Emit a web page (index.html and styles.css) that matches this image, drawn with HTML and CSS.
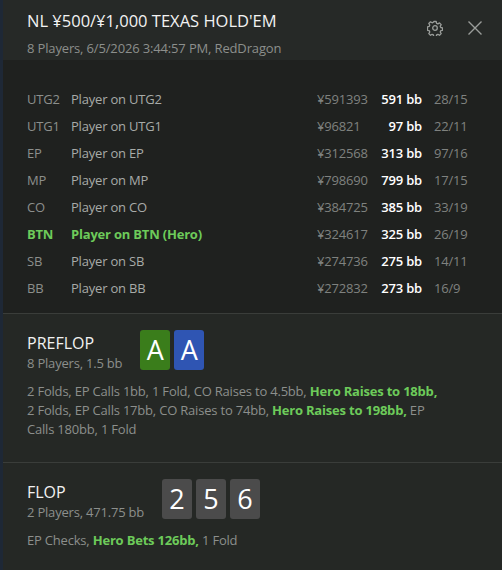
FILE: index.html
```html
<!DOCTYPE html>
<html lang="en">
<head>
    <meta charset="UTF-8">
    <title>Hand Details</title>
    <link rel="stylesheet" href="styles.css">
</head>
<body>
    <div class="panel">
        <div class="header">
            <div class="title-block">
                <div class="title">NL ¥500/¥1,000 TEXAS HOLD'EM</div>
                <div class="subtitle">8 Players, 6/5/2026 3:44:57 PM, RedDragon</div>
            </div>
            <div class="header-icons">
                <svg class="icon gear" width="16" height="16" viewBox="0 0 16 16">
                    <path d="M6.8 1.5h2.4l.4 1.8 1.3.6 1.6-1 1.7 1.7-1 1.6.6 1.3 1.7.4v2.4l-1.7.4-.6 1.3 1 1.6-1.7 1.7-1.6-1-1.3.6-.4 1.7H6.8l-.4-1.7-1.3-.6-1.6 1-1.7-1.7 1-1.6-.6-1.3-1.7-.4V6.8l1.7-.4.6-1.3-1-1.6 1.7-1.7 1.6 1 1.3-.6z" fill="none" stroke="#9a9d9a" stroke-width="1.3" stroke-linejoin="round"/>
                    <circle cx="8" cy="8" r="2.3" fill="none" stroke="#9a9d9a" stroke-width="1.3"/>
                </svg>
                <svg class="icon close" width="16" height="16" viewBox="0 0 16 16">
                    <path d="M1.5 1.5l13 13M14.5 1.5l-13 13" stroke="#9a9d9a" stroke-width="1.4"/>
                </svg>
            </div>
        </div>

        <div class="players">
            <div class="row"><span class="pos">UTG2</span><span class="name">Player on UTG2</span><span class="stack">¥591393</span><span class="bb">591 bb</span><span class="ratio">28/15</span></div>
            <div class="row"><span class="pos">UTG1</span><span class="name">Player on UTG1</span><span class="stack">¥96821</span><span class="bb">97 bb</span><span class="ratio">22/11</span></div>
            <div class="row"><span class="pos">EP</span><span class="name">Player on EP</span><span class="stack">¥312568</span><span class="bb">313 bb</span><span class="ratio">97/16</span></div>
            <div class="row"><span class="pos">MP</span><span class="name">Player on MP</span><span class="stack">¥798690</span><span class="bb">799 bb</span><span class="ratio">17/15</span></div>
            <div class="row"><span class="pos">CO</span><span class="name">Player on CO</span><span class="stack">¥384725</span><span class="bb">385 bb</span><span class="ratio">33/19</span></div>
            <div class="row hero"><span class="pos">BTN</span><span class="name">Player on BTN (Hero)</span><span class="stack">¥324617</span><span class="bb">325 bb</span><span class="ratio">26/19</span></div>
            <div class="row"><span class="pos">SB</span><span class="name">Player on SB</span><span class="stack">¥274736</span><span class="bb">275 bb</span><span class="ratio">14/11</span></div>
            <div class="row"><span class="pos">BB</span><span class="name">Player on BB</span><span class="stack">¥272832</span><span class="bb">273 bb</span><span class="ratio">16/9</span></div>
        </div>

        <div class="street">
            <div class="street-head">
                <div class="street-info">
                    <div class="street-name">PREFLOP</div>
                    <div class="street-meta">8 Players, 1.5 bb</div>
                </div>
                <div class="cards">
                    <div class="card green">A</div>
                    <div class="card blue">A</div>
                </div>
            </div>
            <p class="actions">2 Folds, EP Calls 1bb, 1 Fold, CO Raises to 4.5bb, <b>Hero Raises to 18bb,</b><br>2 Folds, EP Calls 17bb, CO Raises to 74bb, <b>Hero Raises to 198bb,</b> EP Calls 180bb, 1 Fold</p>
        </div>

        <div class="street">
            <div class="street-head">
                <div class="street-info">
                    <div class="street-name">FLOP</div>
                    <div class="street-meta">2 Players, 471.75 bb</div>
                </div>
                <div class="cards">
                    <div class="card grey">2</div>
                    <div class="card grey">5</div>
                    <div class="card grey">6</div>
                </div>
            </div>
            <p class="actions">EP Checks, <b>Hero Bets 126bb,</b> 1 Fold</p>
        </div>
    </div>
</body>
</html>
```

FILE: styles.css
```css
body {
    margin: 0;
    background-color: #1e2836;
    font-family: "Open Sans", "Noto Sans", sans-serif;
}
.panel {
    margin-left: 3px;
    height: 570px;
    background-color: #252825;
    color: #8c8f8c;
    overflow: hidden;
}
.header {
    display: flex;
    justify-content: space-between;
    align-items: flex-start;
    height: 60px;
    padding: 10px 19px 0 24px;
    box-sizing: border-box;
    background-color: #262927;
}
.title {
    color: #f2f2f2;
    font-size: 16.5px;
    line-height: 22px;
}
.subtitle {
    font-size: 13px;
    line-height: 18px;
    margin-top: 7px;
    letter-spacing: -0.15px;
}
.header-icons {
    display: flex;
    gap: 24px;
    margin-top: 10px;
}
.players {
    background-color: #1f211f;
    padding: 26px 24px 11px 24px;
    border-bottom: 1px solid #3a3d3a;
}
.row {
    display: flex;
    font-size: 13px;
    height: 27px;
    line-height: 27px;
    letter-spacing: -0.2px;
}
.pos {
    width: 44px;
}
.name {
    flex: 1;
    color: #a8aba8;
}
.stack {
    width: 58px;
    color: #7f827f;
}
.bb {
    width: 47px;
    text-align: right;
    color: #ffffff;
    font-weight: 600;
}
.ratio {
    width: 44px;
    padding-left: 12px;
    color: #7f827f;
}
.row.hero .pos,
.row.hero .name {
    color: #6dcb5a;
    font-weight: 700;
}
.street {
    padding: 16px 24px 23px 24px;
    border-bottom: 1px solid #3a3d3a;
}
.street-head {
    display: flex;
    align-items: flex-start;
    gap: 18px;
}
.street-info {
    padding-top: 2px;
}
.street-name {
    color: #f2f2f2;
    font-size: 16px;
    line-height: 22px;
}
.street-meta {
    font-size: 13px;
    line-height: 18px;
    letter-spacing: -0.2px;
}
.cards {
    display: flex;
    gap: 4px;
}
.card {
    width: 30px;
    height: 40px;
    border-radius: 3px;
    color: #ffffff;
    font-size: 27px;
    line-height: 40px;
    text-align: center;
}
.card.green {
    background-color: #3a7d1b;
}
.card.blue {
    background-color: #2f55b3;
}
.card.grey {
    background-color: #4b4b4b;
}
.actions {
    margin: 10px 0 0 0;
    max-width: 420px;
    font-size: 13px;
    line-height: 19px;
    letter-spacing: -0.2px;
}
.actions b {
    color: #6dcb5a;
}
```
